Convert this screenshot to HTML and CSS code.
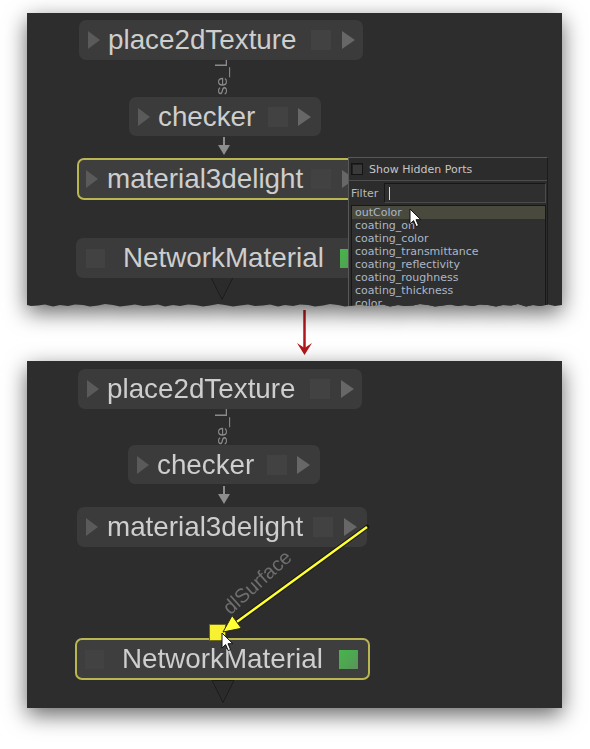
FILE: index.html
```html
<!DOCTYPE html>
<html lang="en">
<head>
<meta charset="utf-8">
<title>Connecting ports in the node editor</title>
<link rel="stylesheet" href="styles.css">
</head>
<body>
<main class="page">
  <section class="shot">
    <div class="canvas canvas-torn">
      <span class="edge-label edge-label-top">se_L</span>

      <div class="node node-place place-a">
        <span class="tri tri-in"></span>
        <span class="node-name">place2dTexture</span>
        <span class="out-group"><span class="port-sq"></span><span class="tri tri-out"></span></span>
      </div>

      <div class="node node-checker checker-a">
        <span class="tri tri-in"></span>
        <span class="node-name">checker</span>
        <span class="out-group"><span class="port-sq"></span><span class="tri tri-out"></span></span>
      </div>

      <svg class="link-arrow link-a" viewBox="0 0 12 18"><line x1="6" y1="0" x2="6" y2="10"/><polygon points="0,8 12,8 6,18"/></svg>

      <div class="node node-mat mat-a is-selected">
        <span class="tri tri-in"></span>
        <span class="node-name">material3delight</span>
        <span class="out-group"><span class="port-sq"></span><span class="tri tri-out"></span></span>
      </div>

      <div class="node node-net net-a">
        <span class="port-sq"></span>
        <span class="node-name">NetworkMaterial</span>
        <span class="port-green"></span>
      </div>

      <svg class="out-tri out-tri-a" viewBox="0 0 24 23"><polygon points="1,0.5 23,0.5 12,22.5"/></svg>

      <div class="port-menu">
        <div class="pm-head">
          <span class="pm-check"></span>
          <span class="pm-head-label">Show Hidden Ports</span>
        </div>
        <div class="pm-filter">
          <span class="pm-filter-label">Filter</span>
          <span class="pm-input"><span class="pm-caret"></span></span>
        </div>
        <ul class="pm-list">
          <li class="pm-item is-hover">outColor</li>
          <li class="pm-item">coating_on</li>
          <li class="pm-item">coating_color</li>
          <li class="pm-item">coating_transmittance</li>
          <li class="pm-item">coating_reflectivity</li>
          <li class="pm-item">coating_roughness</li>
          <li class="pm-item">coating_thickness</li>
          <li class="pm-item">color</li>
        </ul>
      </div>

      <svg class="cursor cursor-a" viewBox="0 0 13 20"><path d="M1,1 L1,16 L4.6,12.6 L7.2,18.6 L9.6,17.6 L7,11.7 L11.8,11.7 Z"/></svg>
    </div>
  </section>

  <div class="flow-arrow">
    <svg viewBox="0 0 535 54"><line x1="277.5" y1="3" x2="277.5" y2="44"/><path d="M270,36 L277.5,48 L285,36 L277.5,41 Z"/></svg>
  </div>

  <section class="shot">
    <div class="canvas canvas-full">
      <span class="edge-label edge-label-bottom">se_L</span>

      <div class="node node-place place-b">
        <span class="tri tri-in"></span>
        <span class="node-name">place2dTexture</span>
        <span class="out-group"><span class="port-sq"></span><span class="tri tri-out"></span></span>
      </div>

      <div class="node node-checker checker-b">
        <span class="tri tri-in"></span>
        <span class="node-name">checker</span>
        <span class="out-group"><span class="port-sq"></span><span class="tri tri-out"></span></span>
      </div>

      <svg class="link-arrow link-b" viewBox="0 0 12 18"><line x1="6" y1="0" x2="6" y2="10"/><polygon points="0,8 12,8 6,18"/></svg>

      <div class="node node-mat mat-b">
        <span class="tri tri-in"></span>
        <span class="node-name">material3delight</span>
        <span class="out-group"><span class="port-sq"></span><span class="tri tri-out"></span></span>
      </div>

      <span class="wire-label">dlSurface</span>

      <div class="node node-net net-b is-selected">
        <span class="port-sq"></span>
        <span class="node-name">NetworkMaterial</span>
        <span class="port-green"></span>
      </div>

      <svg class="out-tri out-tri-b" viewBox="0 0 24 23"><polygon points="1,0.5 23,0.5 12,22.5"/></svg>

      <span class="drop-port"></span>

      <svg class="wire" viewBox="0 0 535 347">
        <line class="wire-edge" x1="340" y1="166" x2="209.7" y2="261"/>
        <line class="wire-core" x1="340" y1="166" x2="209.7" y2="261"/>
        <polygon class="wire-head" points="196,271 214.4,267.3 205.1,254.6"/>
      </svg>

      <svg class="cursor cursor-b" viewBox="0 0 13 20"><path d="M1,1 L1,16 L4.6,12.6 L7.2,18.6 L9.6,17.6 L7,11.7 L11.8,11.7 Z"/></svg>
    </div>
  </section>
</main>
</body>
</html>
```

FILE: styles.css
```css
html, body {
  margin: 0;
  background: #ffffff;
}

body {
  width: 590px;
  height: 749px;
  overflow: hidden;
}

.page {
  display: flex;
  flex-direction: column;
  padding: 13px 0 0 27px;
}

.shot {
  width: 535px;
  filter: drop-shadow(0 7px 11px rgba(0, 0, 0, 0.6));
}

.canvas {
  position: relative;
  background: #2d2d2d;
  overflow: hidden;
  font-family: "Liberation Sans", Arial, sans-serif;
}

.canvas-torn {
  height: 294px;
  clip-path: polygon(0 0, 535px 0, 535px 292px, 528px 293px, 521px 291.5px, 513px 293px, 506px 292px, 499px 293.5px, 491px 291px, 484px 292.5px, 476px 292px, 469px 293.5px, 461px 292px, 453px 291.5px, 446px 293px, 438px 292px, 431px 293px, 423px 291.5px, 416px 292.5px, 408px 293.5px, 401px 292px, 393px 291px, 386px 292.5px, 378px 293px, 371px 292px, 363px 293.5px, 356px 291.5px, 348px 292.5px, 341px 293px, 333px 291.5px, 326px 292.5px, 318px 293.5px, 311px 292px, 303px 291px, 296px 292.5px, 288px 293.5px, 281px 292px, 273px 291.5px, 266px 293px, 258px 292px, 251px 293.5px, 243px 291.5px, 236px 292.5px, 228px 293px, 221px 291.5px, 213px 292.5px, 206px 293.5px, 198px 292px, 191px 291px, 183px 292.5px, 176px 293.5px, 168px 292px, 161px 291.5px, 153px 293px, 146px 292px, 138px 293.5px, 131px 291.5px, 123px 292.5px, 116px 293px, 108px 291.5px, 101px 292.5px, 93px 293.5px, 86px 292px, 78px 291px, 71px 292.5px, 63px 293.5px, 56px 292px, 48px 291.5px, 41px 293px, 33px 292px, 26px 293.5px, 18px 291.5px, 11px 292.5px, 4px 293px, 0 292px);
}

.canvas-full {
  height: 347px;
}

/* ---------- nodes ---------- */
.node {
  position: absolute;
  z-index: 2;
  display: flex;
  align-items: center;
  box-sizing: border-box;
  background: #3b3b3b;
  border-radius: 7px;
  color: #cecece;
  font-size: 27.8px;
  line-height: 1;
  white-space: nowrap;
}

.node.is-selected {
  border: 2px solid #b9b651;
  background: #3e3e3e;
}

.node-name {
  margin-left: 8px;
}

.tri {
  width: 0;
  height: 0;
  border-top: 9px solid transparent;
  border-bottom: 9px solid transparent;
}

.tri-in {
  border-left: 12px solid #5a5a5a;
}

.tri-out {
  border-left: 13px solid #676767;
}

.port-sq {
  width: 20px;
  height: 20px;
  background: #424242;
}

.out-group {
  margin-left: auto;
  display: flex;
  align-items: center;
  gap: 11px;
}

.port-green {
  margin-left: auto;
  width: 19px;
  height: 19px;
  background: linear-gradient(135deg, #46b44a 0%, #4fa552 55%, #5f8e5f 100%);
}

.node-place {
  width: 284px;
  height: 40px;
  padding: 0 8px 0 9px;
}

.node-checker {
  width: 192px;
  height: 39px;
  padding: 0 10px 0 9px;
}

.node-checker .out-group {
  gap: 10px;
}

.node-mat {
  width: 290px;
  height: 40px;
  padding: 0 10px 0 9px;
}

.node-mat .node-name {
  margin-left: 9px;
}

.node-mat.is-selected {
  padding-left: 7px;
  height: 42px;
}

.node-net {
  width: 295px;
  height: 40px;
  padding: 0 12px 0 10px;
}

.node-net .port-sq {
  width: 19px;
  height: 19px;
}

.node-net .node-name {
  margin-left: 18px;
}

.node-net.is-selected {
  padding: 0 10px 0 8px;
  height: 42px;
}

/* positions on the top canvas */
.place-a   { left: 52px;  top: 7px; }
.checker-a { left: 102px; top: 84px; }
.mat-a     { left: 50px;  top: 145px; }
.net-a     { left: 49px;  top: 225px; }

/* positions on the bottom canvas */
.place-b   { left: 51px;  top: 8px; }
.checker-b { left: 101px; top: 84px; }
.mat-b     { left: 50px;  top: 146px; }
.net-b     { left: 48px;  top: 277px; }

/* ---------- links ---------- */
.edge-label {
  position: absolute;
  z-index: 1;
  writing-mode: vertical-rl;
  transform: rotate(180deg);
  font-size: 17px;
  line-height: 16px;
  color: #8a8a8a;
}

.edge-label-top    { left: 187px; top: 45px; }
.edge-label-bottom { left: 187px; top: 47px; }

.link-arrow {
  position: absolute;
  z-index: 1;
  width: 12px;
  height: 18px;
}

.link-arrow line {
  stroke: #8d8d8d;
  stroke-width: 2;
}

.link-arrow polygon {
  fill: #8d8d8d;
}

.link-a { left: 191px; top: 124px; }
.link-b { left: 191px; top: 125px; }

.out-tri {
  position: absolute;
  z-index: 1;
  width: 24px;
  height: 23px;
}

.out-tri polygon {
  fill: #2b2b2b;
  stroke: #1c1c1c;
  stroke-width: 1;
}

.out-tri-a { left: 183px; top: 264px; }
.out-tri-b { left: 184px; top: 319px; }

.wire-label {
  position: absolute;
  z-index: 1;
  left: 186px;
  top: 210px;
  width: 88px;
  text-align: center;
  font-size: 20px;
  line-height: 22px;
  color: #6e6e6e;
  transform: rotate(-42deg);
}

.wire {
  position: absolute;
  z-index: 4;
  left: 0;
  top: 0;
  width: 535px;
  height: 347px;
  pointer-events: none;
}

.wire-edge {
  stroke: #151515;
  stroke-width: 4.5;
  stroke-linecap: round;
}

.wire-core {
  stroke: #ffff33;
  stroke-width: 2.5;
}

.wire-head {
  fill: #ffff33;
  stroke: #2a2a10;
  stroke-width: 1;
  stroke-linejoin: round;
}

.drop-port {
  position: absolute;
  z-index: 3;
  left: 183px;
  top: 264px;
  width: 15px;
  height: 15px;
  background: #f7f132;
  box-shadow: 0 0 0 1px #6d6a1c;
}

/* ---------- port menu ---------- */
.port-menu {
  position: absolute;
  z-index: 5;
  left: 321px;
  top: 144px;
  width: 200px;
  height: 170px;
  box-sizing: border-box;
  background: #2c2c2c;
  border: 1px solid #585858;
  border-right-color: #1b1b1b;
  font-family: "DejaVu Sans", Verdana, sans-serif;
  font-size: 11px;
  line-height: 1;
}

.pm-head {
  display: flex;
  align-items: center;
  height: 22px;
  padding-left: 2px;
  border-bottom: 1px solid #4e4e4e;
}

.pm-check {
  width: 10px;
  height: 10px;
  border: 1px solid #151515;
  background: #3a3a3a;
  box-shadow: inset 1px 1px 0 #222;
}

.pm-head-label {
  margin-left: 6px;
  color: #c6c6c6;
}

.pm-filter {
  display: flex;
  align-items: center;
  height: 24px;
  padding: 0 1px 0 2px;
}

.pm-filter-label {
  color: #b9b9b9;
}

.pm-input {
  flex: 1;
  margin-left: 6px;
  height: 20px;
  box-sizing: border-box;
  display: flex;
  align-items: center;
  padding-left: 4px;
  background: #2f2f2f;
  border: 1px solid #171717;
  border-right-color: #4a4a4a;
  border-bottom-color: #4a4a4a;
}

.pm-caret {
  width: 1px;
  height: 13px;
  background: #d8d8d8;
}

.pm-list {
  list-style: none;
  margin: 0 1px 0 2px;
  padding: 0;
  background: #2f2f2f;
  border: 1px solid #171717;
  border-bottom: 0;
}

.pm-item {
  height: 13px;
  line-height: 13px;
  padding-left: 3px;
  color: #abb7c7;
  white-space: nowrap;
}

.pm-item.is-hover {
  background: #4a493e;
}

/* ---------- cursor ---------- */
.cursor {
  position: absolute;
  z-index: 6;
  width: 13px;
  height: 20px;
}

.cursor path {
  fill: #ffffff;
  stroke: #111111;
  stroke-width: 1;
  stroke-linejoin: round;
}

.cursor-a { left: 382px; top: 195px; }
.cursor-b { left: 194px; top: 271px; }

/* ---------- arrow between shots ---------- */
.flow-arrow {
  width: 535px;
  height: 54px;
}

.flow-arrow svg {
  display: block;
  width: 535px;
  height: 54px;
}

.flow-arrow line {
  stroke: #b3171c;
  stroke-width: 2.5;
}

.flow-arrow path {
  fill: #b3171c;
}
```
